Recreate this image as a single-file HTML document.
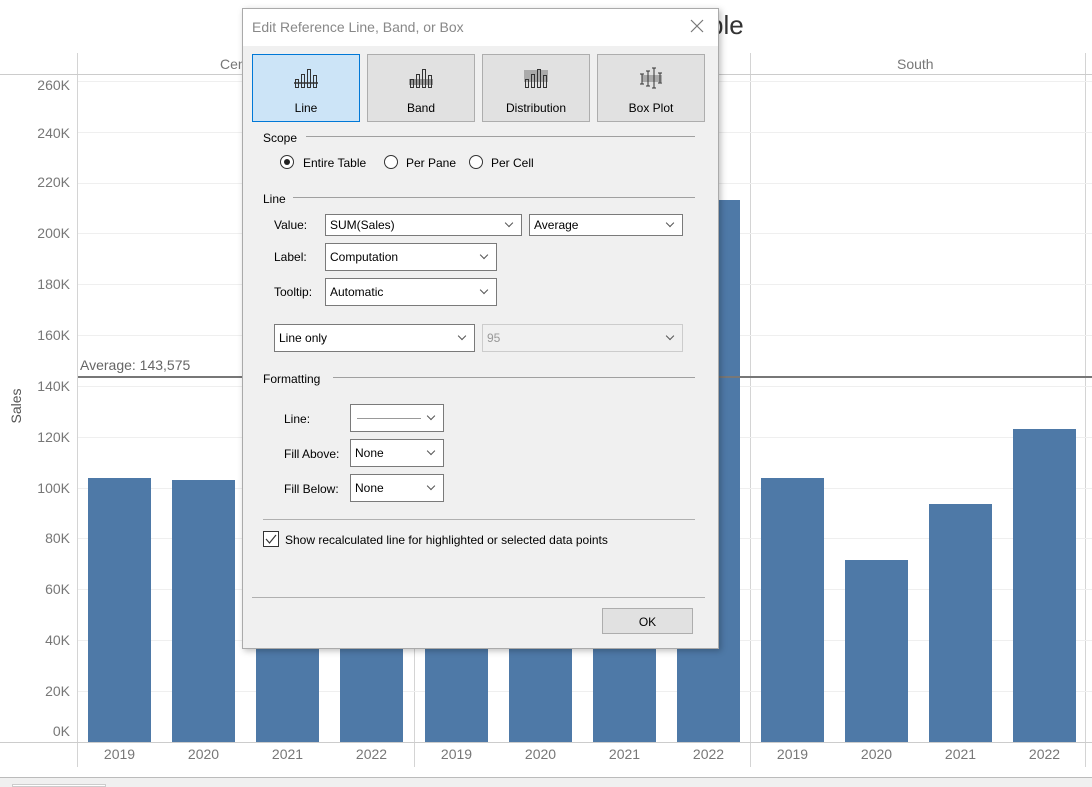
<!DOCTYPE html>
<html><head><meta charset="utf-8"><style>
*{margin:0;padding:0;box-sizing:border-box}
body{width:1092px;height:787px;overflow:hidden;background:#fff;font-family:"Liberation Sans",sans-serif;position:relative}
.a{position:absolute}
.yl{position:absolute;right:1022px;font-size:14px;color:#777;text-align:right;width:60px}
.grid{position:absolute;left:78px;width:1014px;height:1px;background:#efefef}
.bar{position:absolute;background:#4e79a7;bottom:45px;width:63px}
.yr{position:absolute;top:746px;font-size:14px;color:#777;width:63px;text-align:center}
.vl{position:absolute;width:1px;background:#d4d4d4}
.dlg{position:absolute;left:242px;top:8px;width:477px;height:641px;background:#f0f0f0;border:1px solid #aaa;box-shadow:2px 2px 6px rgba(0,0,0,.25);font-size:12px;color:#000}
.dlg .t{position:absolute;left:0;top:0;width:100%;height:37px;background:#fff}
.btn{position:absolute;top:45px;width:108px;height:68px;background:#e1e1e1;border:1px solid #adadad;text-align:center}
.btn span{position:absolute;left:0;right:0;top:46px;font-size:12px}
.btn svg{position:absolute;left:41px;top:12px}
.sec{position:absolute;left:20px;font-size:12px}
.hr{position:absolute;height:1px;background:#a0a0a0}
.sel{position:absolute;background:#fff;border:1px solid #7a7a7a;height:22px;font-size:12px;padding:3px 0 0 4px}
.sel:after{content:"";position:absolute;right:9px;top:calc(50% - 5px);width:5px;height:5px;border-right:1px solid #555;border-bottom:1px solid #555;transform:rotate(45deg)}
.lab{position:absolute;font-size:12px}
.rad{position:absolute;width:14px;height:14px;border:1px solid #333;border-radius:50%;background:#fff}
</style></head><body>
<div class="a" style="left:709px;top:10px;font-size:26px;color:#333">ple</div>

<div class="vl" style="left:77px;top:53px;height:714px"></div>
<div class="vl" style="left:414px;top:53px;height:714px"></div>
<div class="vl" style="left:750px;top:53px;height:714px"></div>
<div class="vl" style="left:1085px;top:53px;height:714px"></div>
<div class="a" style="left:0;top:74px;width:1092px;height:1px;background:#ccc"></div>
<div class="a" style="left:220px;top:56px;font-size:14px;color:#777">Central</div>
<div class="a" style="left:897px;top:56px;font-size:14px;color:#777">South</div>

<div class="grid" style="top:81px"></div><div class="grid" style="top:132px"></div><div class="grid" style="top:183px"></div><div class="grid" style="top:233px"></div><div class="grid" style="top:284px"></div><div class="grid" style="top:335px"></div><div class="grid" style="top:386px"></div><div class="grid" style="top:437px"></div><div class="grid" style="top:488px"></div><div class="grid" style="top:538px"></div><div class="grid" style="top:589px"></div><div class="grid" style="top:640px"></div><div class="grid" style="top:691px"></div>

<div class="yl" style="top:77px">260K</div><div class="yl" style="top:125px">240K</div><div class="yl" style="top:174px">220K</div><div class="yl" style="top:225px">200K</div><div class="yl" style="top:276px">180K</div><div class="yl" style="top:327px">160K</div><div class="yl" style="top:378px">140K</div><div class="yl" style="top:429px">120K</div><div class="yl" style="top:480px">100K</div><div class="yl" style="top:530px">80K</div><div class="yl" style="top:581px">60K</div><div class="yl" style="top:632px">40K</div><div class="yl" style="top:683px">20K</div><div class="yl" style="top:723px">0K</div>
<div class="a" style="left:-4px;top:398px;font-size:14px;color:#555;transform:rotate(-90deg);transform-origin:center;width:40px;text-align:center">Sales</div>

<div class="bar" style="left:88px;top:478px"></div>
<div class="bar" style="left:172px;top:480px"></div>
<div class="bar" style="left:256px;top:420px"></div>
<div class="bar" style="left:340px;top:420px"></div>
<div class="bar" style="left:425px;top:420px"></div>
<div class="bar" style="left:509px;top:420px"></div>
<div class="bar" style="left:593px;top:420px"></div>
<div class="bar" style="left:677px;top:200px"></div>
<div class="bar" style="left:761px;top:478px"></div>
<div class="bar" style="left:845px;top:560px"></div>
<div class="bar" style="left:929px;top:504px"></div>
<div class="bar" style="left:1013px;top:429px"></div>

<div class="a" style="left:78px;top:376px;width:1014px;height:2px;background:#777"></div>
<div class="a" style="left:80px;top:357px;font-size:14px;color:#666">Average: 143,575</div>

<div class="a" style="left:0;top:742px;width:1092px;height:1px;background:#ccc"></div>
<div class="yr" style="left:88px">2019</div><div class="yr" style="left:172px">2020</div><div class="yr" style="left:256px">2021</div><div class="yr" style="left:340px">2022</div>
<div class="yr" style="left:425px">2019</div><div class="yr" style="left:509px">2020</div><div class="yr" style="left:593px">2021</div><div class="yr" style="left:677px">2022</div>
<div class="yr" style="left:761px">2019</div><div class="yr" style="left:845px">2020</div><div class="yr" style="left:929px">2021</div><div class="yr" style="left:1013px">2022</div>
<div class="a" style="left:0;top:777px;width:1092px;height:1px;background:#bbb"></div>
<div class="a" style="left:0;top:778px;width:1092px;height:9px;background:#f0f0f0"></div>
<div class="a" style="left:12px;top:784px;width:94px;height:3px;background:#fff;border:1px solid #ccc"></div>

<div class="dlg">
 <div class="t"></div>
 <div class="a" style="left:9px;top:10px;font-size:14px;color:#888">Edit Reference Line, Band, or Box</div>
 <svg class="a" style="left:447px;top:10px" width="14" height="14"><path d="M1 1L13 13M13 1L1 13" stroke="#777" stroke-width="1.2"/></svg>

 <div class="btn" style="left:9px;background:#cce4f7;border-color:#0078d7"><svg width="24" height="22"><g fill="none" stroke="#333"><rect x="1.5" y="12.5" width="3" height="8"/><rect x="7.5" y="7.5" width="3" height="13"/><rect x="13.5" y="2.5" width="3" height="18"/><rect x="19.5" y="8.5" width="3" height="12"/></g><path d="M0 16H24" stroke="#333" stroke-width="1.5"/></svg><span>Line</span></div>
 <div class="btn" style="left:124px"><svg width="24" height="22"><rect x="0" y="12" width="24" height="6" fill="#999"/><g fill="none" stroke="#333"><rect x="1.5" y="12.5" width="3" height="8"/><rect x="7.5" y="7.5" width="3" height="13"/><rect x="13.5" y="2.5" width="3" height="18"/><rect x="19.5" y="8.5" width="3" height="12"/></g></svg><span>Band</span></div>
 <div class="btn" style="left:239px"><svg width="24" height="22"><rect x="0" y="3" width="24" height="12" fill="#aaa"/><g fill="none" stroke="#333"><rect x="1.5" y="12.5" width="3" height="8"/><rect x="7.5" y="7.5" width="3" height="13"/><rect x="13.5" y="2.5" width="3" height="18"/><rect x="19.5" y="8.5" width="3" height="12"/></g></svg><span>Distribution</span></div>
 <div class="btn" style="left:354px"><svg width="24" height="22"><rect x="3" y="8" width="20" height="7" fill="#aaa"/><g stroke="#333" fill="none"><path d="M3 7V17M1 7H5M1 17H5M9 4V19M7 4H11M7 19H11M15 1V21M13 1H17M13 21H17M21 6V16M19 6H23M19 16H23"/></g></svg><span>Box Plot</span></div>

 <div class="sec" style="top:122px">Scope</div><div class="hr" style="left:63px;top:127px;width:389px"></div>
 <div class="rad" style="left:37px;top:146px"><div style="position:absolute;left:3px;top:3px;width:6px;height:6px;border-radius:50%;background:#222"></div></div>
 <div class="lab" style="left:60px;top:147px">Entire Table</div>
 <div class="rad" style="left:141px;top:146px"></div><div class="lab" style="left:163px;top:147px">Per Pane</div>
 <div class="rad" style="left:226px;top:146px"></div><div class="lab" style="left:248px;top:147px">Per Cell</div>

 <div class="sec" style="top:183px">Line</div><div class="hr" style="left:50px;top:188px;width:402px"></div>
 <div class="lab" style="left:31px;top:209px">Value:</div>
 <div class="sel" style="left:82px;top:205px;width:197px">SUM(Sales)</div>
 <div class="sel" style="left:286px;top:205px;width:154px">Average</div>
 <div class="lab" style="left:31px;top:241px">Label:</div>
 <div class="sel" style="left:82px;top:234px;width:172px;height:28px;padding-top:6px">Computation</div>
 <div class="lab" style="left:31px;top:276px">Tooltip:</div>
 <div class="sel" style="left:82px;top:269px;width:172px;height:28px;padding-top:6px">Automatic</div>
 <div class="sel" style="left:31px;top:315px;width:201px;height:28px;padding-top:6px">Line only</div>
 <div class="sel" style="left:239px;top:315px;width:201px;height:28px;padding-top:6px;border-color:#ccc;color:#999;background:#f0f0f0">95</div>

 <div class="sec" style="top:363px">Formatting</div><div class="hr" style="left:90px;top:368px;width:362px"></div>
 <div class="lab" style="left:41px;top:403px">Line:</div>
 <div class="sel" style="left:107px;top:395px;width:94px;height:28px"><div style="position:absolute;left:6px;top:13px;width:64px;height:1px;background:#999"></div></div>
 <div class="lab" style="left:41px;top:438px">Fill Above:</div>
 <div class="sel" style="left:107px;top:430px;width:94px;height:28px;padding-top:6px">None</div>
 <div class="lab" style="left:41px;top:473px">Fill Below:</div>
 <div class="sel" style="left:107px;top:465px;width:94px;height:28px;padding-top:6px">None</div>

 <div class="hr" style="left:20px;top:510px;width:432px;background:#b0b0b0"></div>
 <div class="a" style="left:20px;top:522px;width:16px;height:16px;border:1px solid #333;background:#fff"><svg width="14" height="14" style="position:absolute;left:0;top:0"><path d="M2 7L5.5 11L12 3" fill="none" stroke="#333" stroke-width="1.2"/></svg></div>
 <div class="lab" style="left:42px;top:524px">Show recalculated line for highlighted or selected data points</div>

 <div class="hr" style="left:9px;top:588px;width:453px;background:#b0b0b0"></div>
 <div class="a" style="left:359px;top:599px;width:91px;height:26px;background:#e1e1e1;border:1px solid #adadad;text-align:center;padding-top:6px;font-size:12px">OK</div>
</div>
</body></html>
